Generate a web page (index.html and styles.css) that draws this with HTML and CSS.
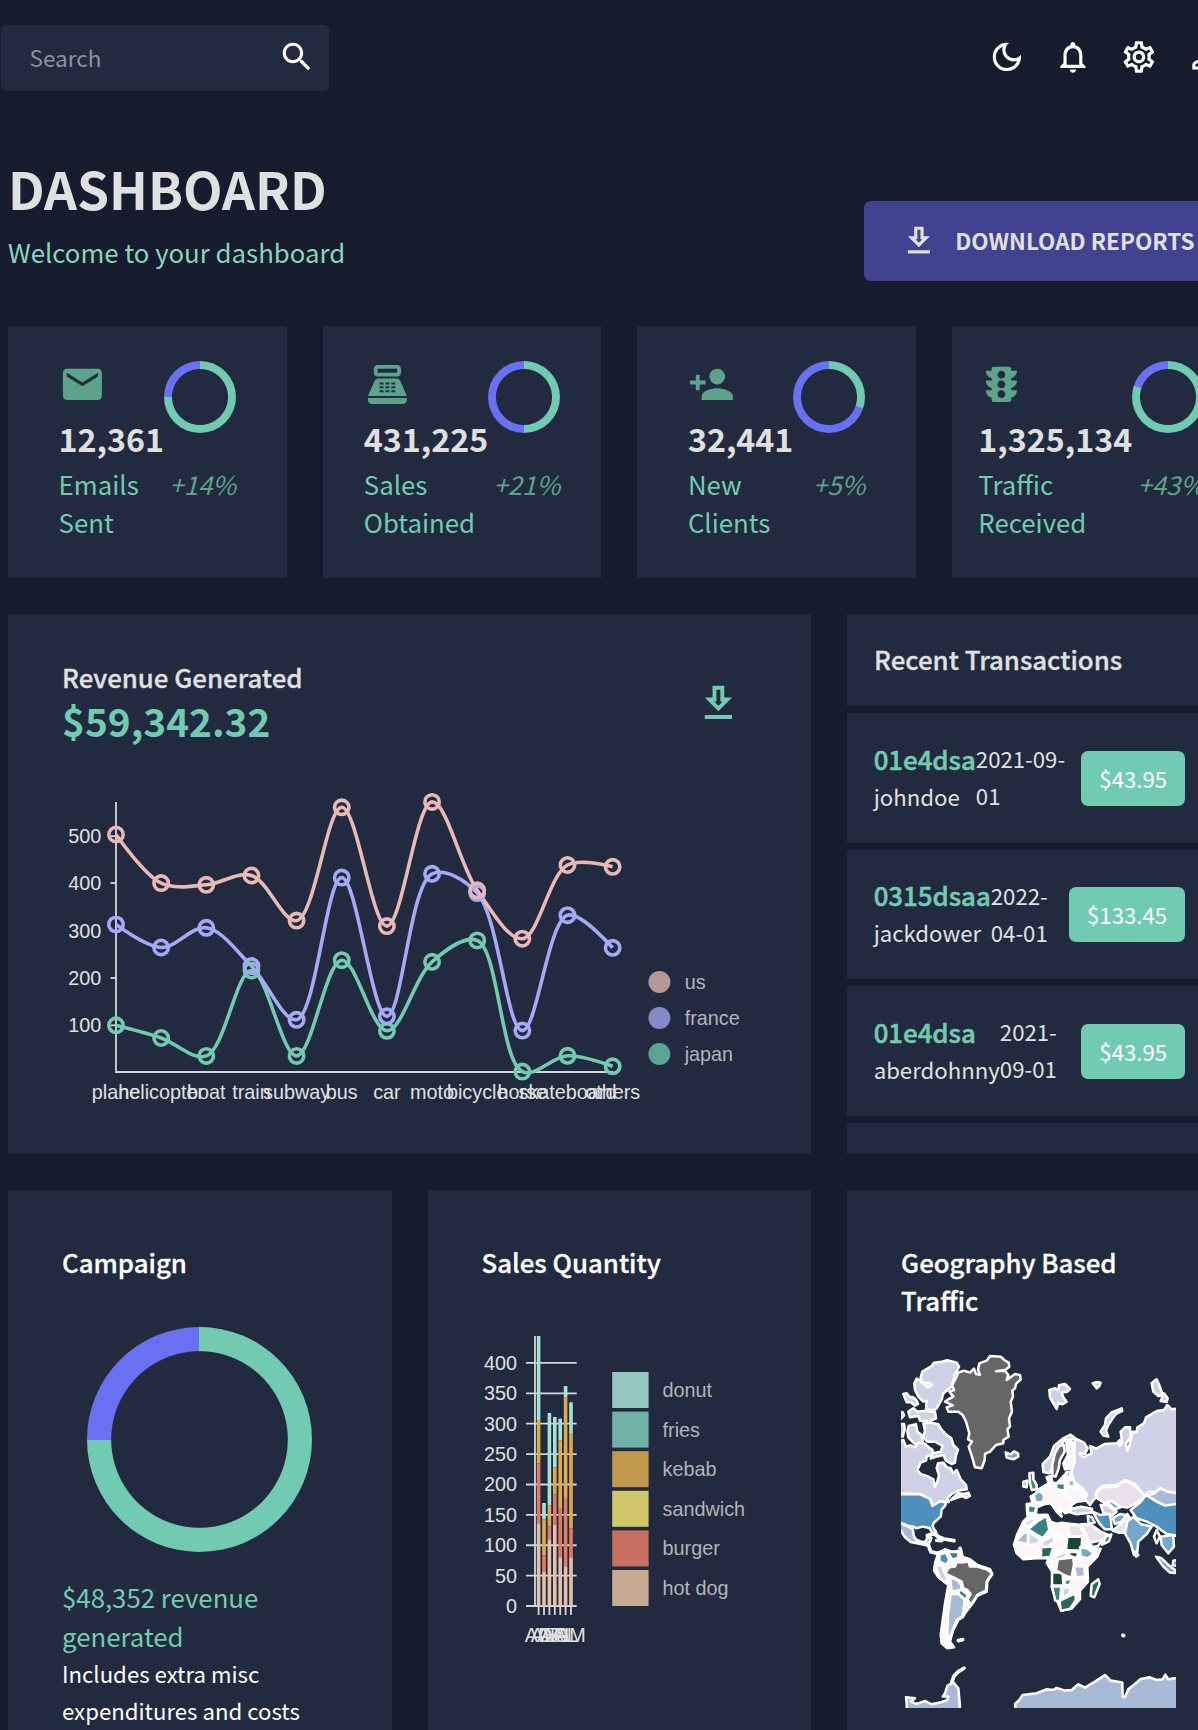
FILE: index.html
```html
<!DOCTYPE html>
<html lang="en">
<head>
<meta charset="utf-8">
<title>Dashboard</title>
<link rel="stylesheet" href="styles.css">
</head>
<body>
<div class="page">
  <header class="topbar">
    <label class="search">
      <span class="search-text">Search</span>
      <svg class="icon" viewBox="0 0 24 24"><path d="M15.5 14h-.79l-.28-.27C15.41 12.59 16 11.11 16 9.5 16 5.91 13.09 3 9.5 3S3 5.91 3 9.5 5.91 16 9.5 16c1.61 0 3.09-.59 4.23-1.57l.27.28v.79l5 4.99L20.49 19l-4.99-5zm-6 0C7.01 14 5 11.99 5 9.5S7.01 5 9.5 5 14 7.01 14 9.5 11.99 14 9.5 14z"/></svg>
    </label>
    <nav class="actions">
      <svg class="icon" viewBox="0 0 24 24"><path d="M9.37 5.51c-.18.64-.27 1.31-.27 1.99 0 4.08 3.32 7.4 7.4 7.4.68 0 1.35-.09 1.99-.27C17.45 17.19 14.93 19 12 19c-3.86 0-7-3.14-7-7 0-2.93 1.81-5.45 4.37-6.49zM12 3c-4.97 0-9 4.03-9 9s4.03 9 9 9 9-4.03 9-9c0-.46-.04-.92-.1-1.36-.98 1.37-2.58 2.26-4.4 2.26-2.98 0-5.4-2.42-5.4-5.4 0-1.81.89-3.42 2.26-4.4-.44-.06-.9-.1-1.36-.1z"/></svg>
      <svg class="icon" viewBox="0 0 24 24"><path d="M12 22c1.1 0 2-.9 2-2h-4c0 1.1.9 2 2 2zm6-6v-5c0-3.07-1.63-5.64-4.5-6.32V4c0-.83-.67-1.5-1.5-1.5s-1.5.67-1.5 1.5v.68C7.64 5.36 6 7.92 6 11v5l-2 2v1h16v-1l-2-2zm-2 1H8v-6c0-2.48 1.51-4.5 4-4.5s4 2.02 4 4.5v6z"/></svg>
      <svg class="icon" viewBox="0 0 24 24"><path d="M19.43 12.98c.04-.32.07-.64.07-.98 0-.34-.03-.66-.07-.98l2.11-1.65c.19-.15.24-.42.12-.64l-2-3.46c-.09-.16-.26-.25-.44-.25-.06 0-.12.01-.17.03l-2.49 1c-.52-.4-1.08-.73-1.69-.98l-.38-2.65C14.46 2.18 14.25 2 14 2h-4c-.25 0-.46.18-.49.42l-.38 2.65c-.61.25-1.17.59-1.69.98l-2.49-1c-.06-.02-.12-.03-.18-.03-.17 0-.34.09-.43.25l-2 3.46c-.13.22-.07.49.12.64l2.11 1.65c-.04.32-.07.65-.07.98 0 .33.03.66.07.98l-2.11 1.65c-.19.15-.24.42-.12.64l2 3.46c.09.16.26.25.44.25.06 0 .12-.01.17-.03l2.49-1c.52.4 1.08.73 1.69.98l.38 2.65c.03.24.24.42.49.42h4c.25 0 .46-.18.49-.42l.38-2.65c.61-.25 1.17-.59 1.69-.98l2.49 1c.06.02.12.03.18.03.17 0 .34-.09.43-.25l2-3.46c.12-.22.07-.49-.12-.64l-2.11-1.65zm-1.98-1.71c.04.31.05.52.05.73 0 .21-.02.43-.05.73l-.14 1.13.89.7 1.08.84-.7 1.21-1.27-.51-1.04-.42-.9.68c-.43.32-.84.56-1.25.73l-1.06.43-.16 1.13-.2 1.35h-1.4l-.19-1.35-.16-1.13-1.06-.43c-.43-.18-.83-.41-1.23-.71l-.91-.7-1.06.43-1.27.51-.7-1.21 1.08-.84.89-.7-.14-1.13c-.03-.31-.05-.54-.05-.74s.02-.43.05-.73l.14-1.13-.89-.7-1.08-.84.7-1.21 1.27.51 1.04.42.9-.68c.43-.32.84-.56 1.25-.73l1.06-.43.16-1.13.2-1.35h1.39l.19 1.35.16 1.13 1.06.43c.43.18.83.41 1.23.71l.91.7 1.06-.43 1.27-.51.7 1.21-1.07.85-.89.7.14 1.13zM12 8c-2.21 0-4 1.79-4 4s1.79 4 4 4 4-1.79 4-4-1.79-4-4-4zm0 6c-1.1 0-2-.9-2-2s.9-2 2-2 2 .9 2 2-.9 2-2 2z"/></svg>
      <svg class="icon" viewBox="0 0 24 24"><path d="M12 5.9c1.16 0 2.1.94 2.1 2.1s-.94 2.1-2.1 2.1S9.9 9.16 9.9 8s.94-2.1 2.1-2.1m0 9c2.97 0 6.1 1.46 6.1 2.1v1.1H5.9V17c0-.64 3.13-2.1 6.1-2.1M12 4C9.79 4 8 5.79 8 8s1.79 4 4 4 4-1.79 4-4-1.79-4-4-4zm0 9c-2.67 0-8 1.34-8 4v3h16v-3c0-2.66-5.33-4-8-4z"/></svg>
    </nav>
  </header>

  <main class="content">
    <div class="heading">
      <div>
        <h1>DASHBOARD</h1>
        <p class="welcome">Welcome to your dashboard</p>
      </div>
      <div class="button">
        <svg class="icon" viewBox="0 0 24 24"><path d="M19 9h-4V3H9v6H5l7 7 7-7zm-8 2V5h2v6h1.17L12 13.17 9.83 11H11zm-6 7h14v2H5z"/></svg>
        <span>DOWNLOAD REPORTS</span>
      </div>
    </div>

    <div class="grid">
      <section class="card stat">
        <div class="stat-box">
          <div class="stat-row">
            <div>
              <svg class="icon-lg" viewBox="0 0 24 24"><path d="M20 4H4c-1.1 0-1.99.9-1.99 2L2 18c0 1.1.9 2 2 2h16c1.1 0 2-.9 2-2V6c0-1.1-.9-2-2-2zm0 4l-8 5-8-5V6l8 5 8-5v2z"/></svg>
              <div class="number">12,361</div>
            </div>
            <div class="ring ring-75"></div>
          </div>
          <div class="stat-row"><span class="label">Emails Sent</span><span class="delta">+14%</span></div>
        </div>
      </section>
      <section class="card stat">
        <div class="stat-box">
          <div class="stat-row">
            <div>
              <svg class="icon-lg" viewBox="0 0 24 24"><path fill-rule="evenodd" d="M17 2H7c-1.1 0-2 .9-2 2v2c0 1.1.9 2 2 2h10c1.1 0 2-.9 2-2V4c0-1.1-.9-2-2-2zm0 4H7V4h10v2zm3 16H4c-1.1 0-2-.9-2-2v-1h20v1c0 1.1-.9 2-2 2zm-1.47-11.81C18.21 9.47 17.49 9 16.7 9H7.3c-.79 0-1.51.47-1.83 1.19L2 18h20l-3.47-7.81zM8 11h2v1H8zM11 11h2v1h-2zM14 11h2v1h-2zM8 13h2v1H8zM11 13h2v1h-2zM14 13h2v1h-2zM8 15h2v1H8zM11 15h2v1h-2zM14 15h2v1h-2z"/></svg>
              <div class="number">431,225</div>
            </div>
            <div class="ring ring-50"></div>
          </div>
          <div class="stat-row"><span class="label">Sales Obtained</span><span class="delta">+21%</span></div>
        </div>
      </section>
      <section class="card stat">
        <div class="stat-box">
          <div class="stat-row">
            <div>
              <svg class="icon-lg" viewBox="0 0 24 24"><path d="M15 12c2.21 0 4-1.79 4-4s-1.79-4-4-4-4 1.79-4 4 1.79 4 4 4zm-9-2V7H4v3H1v2h3v3h2v-3h3v-2H6zm9 4c-2.67 0-8 1.34-8 4v2h16v-2c0-2.66-5.33-4-8-4z"/></svg>
              <div class="number">32,441</div>
            </div>
            <div class="ring ring-30"></div>
          </div>
          <div class="stat-row"><span class="label">New Clients</span><span class="delta">+5%</span></div>
        </div>
      </section>
      <section class="card stat">
        <div class="stat-box">
          <div class="stat-row">
            <div>
              <svg class="icon-lg" viewBox="0 0 24 24"><path d="M20 10h-3V8.86c1.72-.45 3-2 3-3.86h-3V4c0-.55-.45-1-1-1H8c-.55 0-1 .45-1 1v1H4c0 1.86 1.28 3.41 3 3.86V10H4c0 1.86 1.28 3.41 3 3.86V15H4c0 1.86 1.28 3.41 3 3.86V20c0 .55.45 1 1 1h8c.55 0 1-.45 1-1v-1.14c1.72-.45 3-2 3-3.86h-3v-1.14c1.72-.45 3-2 3-3.86zm-8 9c-1.11 0-2-.9-2-2s.89-2 2-2c1.1 0 2 .9 2 2s-.89 2-2 2zm0-5c-1.11 0-2-.9-2-2s.89-2 2-2c1.1 0 2 .9 2 2s-.89 2-2 2zm0-5c-1.11 0-2-.9-2-2 0-1.11.89-2 2-2 1.1 0 2 .89 2 2 0 1.1-.89 2-2 2z"/></svg>
              <div class="number">1,325,134</div>
            </div>
            <div class="ring ring-80"></div>
          </div>
          <div class="stat-row"><span class="label">Traffic Received</span><span class="delta">+43%</span></div>
        </div>
      </section>

      <section class="card revenue">
        <div class="revenue-head">
          <div>
            <h2>Revenue Generated</h2>
            <div class="amount">$59,342.32</div>
          </div>
          <svg class="icon-lg accent" viewBox="0 0 24 24"><path d="M19 9h-4V3H9v6H5l7 7 7-7zm-8 2V5h2v6h1.17L12 13.17 9.83 11H11zm-6 7h14v2H5z"/></svg>
        </div>
        <svg class="chart" id="line-chart" width="803" height="374" viewBox="8 780 803 374"></svg>
      </section>

      <section class="card transactions">
        <div class="tx-head"><h2>Recent Transactions</h2></div>
        <div class="tx">
          <div class="who"><div class="tx-id">01e4dsa</div><div class="user">johndoe</div></div>
          <div class="date">2021-09-01</div>
          <div class="cost">$43.95</div>
        </div>
        <div class="tx">
          <div class="who"><div class="tx-id">0315dsaa</div><div class="user">jackdower</div></div>
          <div class="date">2022-04-01</div>
          <div class="cost">$133.45</div>
        </div>
        <div class="tx">
          <div class="who"><div class="tx-id">01e4dsa</div><div class="user">aberdohnny</div></div>
          <div class="date">2021-09-01</div>
          <div class="cost">$43.95</div>
        </div>
      </section>

      <section class="card panel">
        <h2 class="white">Campaign</h2>
        <div class="ring ring-75 ring-big"></div>
        <div class="campaign-total">$48,352 revenue generated</div>
        <div class="campaign-note">Includes extra misc expenditures and costs</div>
      </section>

      <section class="card panel">
        <h2 class="white">Sales Quantity</h2>
        <svg class="bars" id="bar-chart" width="383" height="400" viewBox="428 1281 383 400"></svg>
      </section>

      <section class="card panel">
        <h2 class="white">Geography Based Traffic</h2>
        <svg class="map" width="275" height="367.6" viewBox="33 0 825 1103">
          <g class="land">
            <path class="c2" d="M155 65L172 61 200 68 207 80 200 95 193 105 190 120 185 140 160 160 155 178 140 205 128 212 108 205 110 182 100 185 85 170 75 150 73 130 80 116 92 122 95 130 118 128 126 135 112 142 97 125 92 112 97 95 125 78 132 68Z"/>
            <path class="c2" d="M40 162L50 160 58 170 70 172 80 182 84 192 75 197 62 187 50 187ZM55 215L70 205 82 215 105 212 135 216 138 235 120 243 90 242 85 228 60 232ZM20 215L38 217 42 226 33 236 20 236Z"/>
            <path class="c2" d="M100 250L122 248 145 253 155 270 170 285 184 295 190 315 204 328 197 350 195 368 185 372 168 362 160 345 140 350 122 356 128 340 152 335 158 318 135 305 112 305 100 290 105 272Z"/>
            <path class="c2" d="M20 252L42 252 44 268 38 290 20 285ZM56 258L78 253 82 275 95 285 98 304 84 320 70 308 55 292 52 275Z"/>
            <path class="c2" d="M20 305L40 300 48 320 62 316 76 322 85 308 102 310 116 322 128 330 125 345 110 350 108 362 92 368 82 390 92 402 115 410 130 418 134 440 142 425 147 405 140 385 144 370 160 368 170 382 182 385 190 400 200 390 212 418 228 435 230 448 205 452 185 462 172 475 176 486 150 484 128 500 122 480 95 463 20 459Z"/>
            <path class="c2" d="M205 460L222 462 235 458 240 468 228 474 215 468 195 476 182 480Z"/>
            <path class="c5" d="M20 463L90 463 120 477 127 498 150 484 168 488 165 498 155 508 152 530 130 550 128 560 138 578 130 584 118 564 98 560 78 565 70 560 55 558 20 543Z"/>
            <path class="c3" d="M20 545L55 560 68 568 72 590 82 603 96 608 108 603 112 592 124 594 120 606 108 616 92 612 62 606 45 592 33 572 20 565Z"/>
            <path class="thin" d="M84 603L115 615 122 635 140 640 150 638M112 587L132 581 145 590 162 597 192 602M140 601L155 602M136 575L138 584M210 625L216 650"/>
            <path class="c0" d="M300 48L332 50 343 60 356 68 358 80 345 90 318 94 345 92 355 105 350 120 375 102 390 105 392 118 378 132 375 145 367 152 369 170 362 185 366 215 357 235 360 260 352 268 356 290 340 300 340 310 318 315 300 335 285 342 284 360 275 385 255 382 246 350 236 320 246 305 234 298 238 280 228 245 218 225 205 215 175 215 170 202 188 196 165 185 175 178 190 170 178 155 192 150 186 135 195 120 205 98 222 92 240 98 252 86 258 102 270 104 264 90 268 70 290 62Z"/>
            <path class="c4" d="M347 337L362 343 372 334 384 340 385 350 370 358 350 353Z"/>
            <path class="c2" d="M478 150L495 145 505 150 507 136 525 132 540 147 530 156 515 157 520 172 530 185 518 193 505 190 500 207 490 190 480 172ZM608 130L620 126 632 128 628 138 620 145ZM785 130L800 118 810 140 818 165 805 168 790 155ZM822 160L833 175 830 186 812 183ZM695 205L697 213 678 222 668 235 655 255 648 272 655 290 640 287 632 275 645 255 648 235 665 217Z"/>
            <path class="c2" d="M555 295L582 308 593 325 585 342 568 340 580 352 605 340 600 318 618 326 645 312 680 310 690 300 688 318 697 310 692 275 705 262 720 262 722 290 708 312 712 333 720 310 728 275 740 276 742 262 762 250 768 232 800 213 822 210 832 195 845 208 870 205 870 460 830 455 810 445 800 455 775 455 765 470 735 432 705 420 680 435 635 438 620 455 622 470 610 480 600 495 585 478 580 450 552 430 543 405 552 360Z"/>
            <path class="c2" d="M458 372L480 350 492 318 518 296 542 284 555 294 540 300 525 300 505 325 492 350 486 385 478 400 460 396Z"/>
            <path class="c0" d="M508 318L522 315 524 335 510 360 506 385 497 410 487 408 487 375 495 340Z"/>
            <path class="c1" d="M528 302L548 305 553 345 555 365 545 385 525 388 520 370 534 345Z"/>
            <path class="c1" d="M410 492L428 490 422 470 436 462 446 448 462 438 476 430 470 412 482 408 488 428 500 430 530 398 545 400 552 425 580 448 590 465 585 482 560 485 545 495 540 515 525 520 508 500 515 530 500 515 482 490 462 493 440 502 438 520 412 525Z"/>
            <path class="c7" d="M418 400L430 398 430 418 440 435 440 448 425 450 420 430ZM414 495L440 500 434 518 414 520Z"/>
            <path class="c4" d="M400 425L412 422 410 442 400 440ZM430 465L450 452 462 466 460 485 438 488Z"/>
            <path class="c7" d="M498 430L525 430 524 452 500 448ZM530 395L540 395 540 410 530 410Z"/>
            <path class="c3" d="M535 422L550 418 556 438 535 440Z"/>
            <path class="c1" d="M530 452L562 445 590 460 575 475 545 480 530 468Z"/>
            <path class="c2" d="M540 508L572 500 606 506 606 518 560 523 542 518Z"/>
            <path class="c6" d="M616 465L635 442 680 440 702 422 732 435 765 468 738 490 712 503 690 500 665 483 648 492 625 478Z"/>
            <path class="c4" d="M650 485L665 483 692 502 675 508Z"/>
            <path class="c2" d="M632 495L650 495 680 515 665 528 640 518Z"/>
            <path class="c5" d="M608 515L630 525 660 522 666 568 645 568 628 550Z"/>
            <path class="c4" d="M668 535L690 522 708 525 695 545 675 552Z"/>
            <path class="c6" d="M668 572L700 545 712 522 722 538 705 578 685 578Z"/>
            <path class="c7" d="M593 528L606 532 614 548 596 552Z"/>
            <path class="c3" d="M768 465L790 462 812 445 832 455 870 462 870 492 825 497 800 485Z"/>
            <path class="c5" d="M768 465L800 485 825 497 870 490 870 590 830 582 800 560 770 545 740 535 722 510 750 488Z"/>
            <path class="c4" d="M712 545L730 530 752 552 785 560 770 582 745 605 742 635 732 645 722 610 705 580Z"/>
            <path class="c9" d="M800 570L810 590 800 610 792 590Z"/>
            <path class="c4" d="M812 590L850 585 852 620 835 640 815 615ZM798 650L815 655 835 675 858 692 870 700 840 698 820 680ZM735 635L745 645 738 650ZM850 662L870 660 870 680 848 675Z"/>
            <path class="c1" d="M400 545L412 532 440 525 472 524 482 545 500 552 515 548 570 555 580 560 600 625 632 626 622 650 592 680 594 725 570 752 570 778 545 806 514 812 502 785 485 742 490 700 472 672 474 655 440 655 400 658 380 640 372 615 382 582Z"/>
            <path class="c7" d="M414 568L445 542 470 528 478 570 458 595Z"/>
            <path class="c2" d="M402 550L428 534 438 542 412 560ZM414 575L452 600 440 612 414 616ZM456 604L494 586 492 606 470 622 455 618Z"/>
            <path class="c3" d="M378 602L400 580 414 575 414 612 382 606Z"/>
            <path class="c1" d="M476 550L535 555 535 596 480 572ZM495 586L530 598 522 630 495 640Z"/>
            <path class="c6" d="M537 553L568 555 584 588 537 590Z"/>
            <path class="c9" d="M532 590L577 590 574 632 528 630ZM535 636L565 636 560 655 540 648ZM486 698L518 698 520 737 486 737Z"/>
            <path class="c8" d="M453 622L490 620 482 650 453 654ZM508 783L535 770 555 760 558 780 540 807 513 812ZM605 733L625 718 629 732 613 772 602 768Z"/>
            <path class="c7" d="M495 650L530 638 528 648 500 658ZM522 722L548 715 538 735 525 735ZM486 740L514 740 510 784 496 782Z"/>
            <path class="c4" d="M570 622L590 625 612 640 595 655 572 650ZM470 668L488 665 482 682Z"/>
            <path class="c0" d="M503 658L550 653 552 675 544 714 520 704 498 691Z"/>
            <path class="c3" d="M552 678L582 680 586 710 558 712Z"/>
            <path class="c2" d="M517 746L540 740 540 760 518 774Z"/>
            <path class="c6" d="M573 553L600 552 632 575 655 585 645 600 608 618 595 598Z"/>
            <path class="c9" d="M603 608L637 600 624 618 604 622Z"/>
            <path class="c7" d="M648 590L664 583 657 604 636 614Z"/>
          </g>
          <g class="land" transform="translate(0 540)">
            <path class="c1" d="M145 98L165 88 185 95 205 93 215 110 240 118 262 135 300 148 307 162 292 185 290 215 262 228 248 250 225 280 218 292 205 300 190 330 185 345 180 365 192 382 172 385 155 370 152 345 165 250 175 195 145 172 132 152 135 130Z"/>
            <path class="c5" d="M148 104L168 98 178 120 168 135 148 124Z"/>
            <path class="c7" d="M172 96L205 96 205 112 188 120ZM206 204L234 225 226 240 206 222ZM220 254L236 260 228 272Z"/>
            <path class="c2" d="M136 138L155 136 165 160 178 190 150 176Z"/>
            <path class="c3" d="M180 172L200 180 215 195 212 210 185 215ZM182 222L205 222 224 240 218 290 200 300 182 345 178 365 172 340 174 280Z"/>
            <path class="c0" d="M165 160L178 142 195 140 200 126 215 128 235 125 240 140 262 140 290 148 306 160 290 185 288 212 262 225 244 253 232 240 242 222 232 210 220 205 215 185 190 172Z"/>
            <path class="thin" d="M158 340L155 362 180 380M205 362L218 359M699 346L701 347"/>
            <path class="c3" d="M378 580L375 552 388 540 398 525 440 520 470 508 490 510 500 504 525 512 545 510 565 493 585 503 615 485 645 465 662 482 697 488 698 530 705 532 715 508 740 488 750 478 778 472 800 480 818 478 826 464 835 478 870 472 870 580ZM50 580L50 550 48 532 75 535 62 545 80 552 105 543 125 553 150 548 172 540 175 530 158 530 165 520 172 498 190 487 205 505 210 560 200 580Z"/>
            <path class="thin" d="M185 488L192 468 205 455 222 445"/>
          </g>
        </svg>
      </section>
    </div>
  </main>
</div>
<script src="charts.js"></script>
</body>
</html>
```
FILE: styles.css
```css
* { box-sizing: border-box; }

body {
  margin: 0;
  background: #161b2d;
  color: #e0e0e0;
  font-family: "Noto Sans CJK JP", "Noto Sans CJK SC", "Open Sans", sans-serif;
  font-size: 22.2px;
  line-height: 37px;
}

h1, h2, p { margin: 0; }

.page {
  width: 1198px;
  height: 1730px;
  overflow: hidden;
}

.topbar {
  display: flex;
  justify-content: space-between;
  align-items: flex-start;
  width: 1224px;
  padding: 25px 0 0 1px;
}

.search {
  display: flex;
  justify-content: space-between;
  align-items: center;
  width: 328px;
  height: 66px;
  padding: 0 13px 2px 28.6px;
  border-radius: 5px;
  background: #222a3f;
}

.search-text { color: #8e929c; font-size: 22.5px; }

.icon {
  display: block;
  flex: none;
  width: 37.8px;
  height: 37.8px;
  fill: #fff;
}

.icon-lg {
  display: block;
  width: 46.8px;
  height: 46.8px;
  fill: #5da38b;
}

.icon-lg.accent { fill: #71cbb0; }

.actions {
  display: flex;
  gap: 28.2px;
  padding-top: 13.2px;
}

.content {
  width: 1230.6px;
  padding: 60.5px 0 0 8px;
}

.heading {
  display: flex;
  justify-content: space-between;
  align-items: flex-end;
  height: 129.5px;
  margin-bottom: 45px;
}

.heading > div:first-child { align-self: flex-start; }

h1 {
  font-size: 51.4px;
  font-weight: 700;
  line-height: 72px;
}

.welcome {
  margin-top: 9.3px;
  color: #87d6be;
  font-size: 25.8px;
  line-height: 38px;
}

.button {
  display: flex;
  align-items: center;
  gap: 17.4px;
  width: 366.6px;
  height: 80px;
  padding: 0 0 1px 36px;
  border-radius: 7px;
  background: #414391;
  font-size: 22.5px;
  font-weight: 700;
  white-space: nowrap;
}

.button .icon { fill: #e0e0e0; }

.grid {
  display: grid;
  grid-template-columns: repeat(12, minmax(0, 1fr));
  grid-template-rows: 252px 540px 576px;
  gap: 36px;
}

.card {
  background: #222a3f;
  min-width: 0;
  overflow: hidden;
}

.stat {
  grid-column: span 3;
  display: flex;
  justify-content: center;
  padding-top: 35px;
}

.stat-box { width: min-content; }

.stat-row {
  display: flex;
  justify-content: space-between;
}

.number {
  margin: 3.9px 0 1px;
  font-size: 32.2px;
  font-weight: 700;
  line-height: 52px;
}

.label, .delta {
  font-size: 25.8px;
  line-height: 38px;
}

.label { color: #71cbb0; }
.delta { color: #5da38b; font-style: italic; }

.ring {
  --share: 75%;
  --hole: 28px;
  flex: none;
  width: 72px;
  height: 72px;
  border-radius: 50%;
  background:
    radial-gradient(circle, #222a3f calc(var(--hole) - .5px), transparent calc(var(--hole) + .5px)),
    conic-gradient(#71cbb0 var(--share), #6a70f2 0);
}

.ring-50 { --share: 50%; }
.ring-30 { --share: 30%; }
.ring-80 { --share: 80%; }

.ring-big {
  --hole: 88.3px;
  width: 225px;
  height: 225px;
  margin: 46.2px auto 26.3px;
}

h2 {
  font-size: 25.8px;
  font-weight: 500;
  line-height: 38px;
  -webkit-text-stroke: .3px currentColor;
}

.white { color: #fff; }

.revenue { grid-column: span 8; }

.revenue-head {
  display: flex;
  justify-content: space-between;
  height: 166px;
  padding: 44px 69px 0 54px;
}

.revenue-head .icon-lg { margin-top: 22px; }

.amount {
  margin-top: -4px;
  color: #71cbb0;
  font-size: 38.8px;
  font-weight: 700;
  line-height: 56px;
}

.chart, .bars, .map { display: block; }

svg text {
  font-family: "Liberation Sans", Arial, sans-serif;
  font-size: 19.8px;
  fill: #e0e0e0;
}

svg .legend text { fill: #b2b4b9; }

.axis { stroke: #d5d6d8; stroke-width: 1.8; fill: none; }
.series { fill: none; stroke-width: 3.6; }

.transactions { grid-column: span 4; }

.tx-head {
  height: 99.2px;
  padding: 25.8px 27px 0;
  border-bottom: 7.2px solid #161b2d;
}

.tx {
  display: flex;
  justify-content: space-between;
  align-items: center;
  height: 136.5px;
  padding: 0 45.5px 0 26.6px;
  border-bottom: 7.2px solid #161b2d;
}

.who, .cost { flex: none; }

.who { margin-top: -1px; }
.date { margin-top: -1px; }

.tx-id {
  color: #71cbb0;
  font-size: 25.8px;
  font-weight: 500;
  line-height: 38px;
  -webkit-text-stroke: .5px currentColor;
}

.cost {
  height: 55px;
  margin-top: 1px;
  padding: 8.6px 18px;
  border-radius: 7px;
  background: #71cbb0;
  color: #fff;
}

.panel {
  grid-column: span 4;
  padding: 52.8px 54px 0;
}

.campaign-total {
  color: #71cbb0;
  font-size: 25.8px;
  line-height: 38.5px;
}

.campaign-note { color: #fff; }

.bars { margin-left: -54px; }

.map { margin-top: 21.2px; }

.land path {
  stroke: #fff;
  stroke-width: 7.5;
  stroke-linejoin: round;
}

.land .thin { fill: none; stroke-width: 11; stroke-linecap: round; }

.land .c0 { fill: #666; }
.land .c1 { fill: #fcf6fb; }
.land .c2 { fill: #d0d1e6; }
.land .c3 { fill: #a9bad8; }
.land .c4 { fill: #76a6cc; }
.land .c5 { fill: #4f8fbd; }
.land .c6 { fill: #e9e0ec; }
.land .c7 { fill: #388084; }
.land .c8 { fill: #2d6a56; }
.land .c9 { fill: #1c4636; }
```
FILE: charts.js
```js
const NS = "http://www.w3.org/2000/svg";

function add(parent, tag, attrs, text) {
  const el = document.createElementNS(NS, tag);
  for (const key in attrs) el.setAttribute(key, attrs[key]);
  if (text !== undefined) el.textContent = text;
  parent.appendChild(el);
  return el;
}

// Centripetal Catmull-Rom spline through the points
function spline(pts) {
  const dist = (a, b) => Math.hypot(a[0] - b[0], a[1] - b[1]);
  let d = "M" + pts[0];
  for (let i = 0; i < pts.length - 1; i++) {
    const p0 = pts[i - 1] || pts[i], p1 = pts[i], p2 = pts[i + 1], p3 = pts[i + 2] || p2;
    const A = dist(p0, p1), B = dist(p1, p2), C = dist(p2, p3);
    const a = Math.sqrt(A), b = Math.sqrt(B), c = Math.sqrt(C);
    const c1 = [0, 1].map(k => a < 1e-6 ? p1[k] :
      (p1[k] * (2 * A + 3 * a * b + B) - p0[k] * B + p2[k] * A) / (3 * a * (a + b)));
    const c2 = [0, 1].map(k => c < 1e-6 ? p2[k] :
      (p2[k] * (2 * C + 3 * c * b + B) + p1[k] * C - p3[k] * B) / (3 * c * (c + b)));
    d += "C" + c1 + " " + c2 + " " + p2;
  }
  return d;
}

function lineChart() {
  const svg = document.getElementById("line-chart");
  const names = ["plane", "helicopter", "boat", "train", "subway", "bus", "car", "moto", "bicycle", "horse", "skateboard", "others"];
  const x = i => 116 + i * 45.15;
  const series = [
    ["#71cbb0", [1025.3, 1038, 1055.9, 970.5, 1055.9, 960.2, 1030.8, 961.8, 940.4, 1071.6, 1055.8, 1066.3]],
    ["#a5a9f6", [924.4, 947.5, 927.8, 966.1, 1019.8, 877.6, 1016.3, 873.8, 893.1, 1030.6, 915.2, 947.8]],
    ["#e8b9b6", [834.5, 883.1, 884.8, 875.5, 920.6, 807.3, 926.1, 801.9, 890.3, 938.7, 865, 866.8]]
  ];
  add(svg, "path", { class: "axis", d: "M116 802V1072H613" });
  [[500, 836.2], [400, 883], [300, 931], [200, 978], [100, 1025.3]].forEach(([v, y]) => {
    add(svg, "path", { class: "axis", d: `M110.5 ${y}H116` });
    add(svg, "text", { x: 101.3, y: y + 7, "text-anchor": "end" }, v);
  });
  names.forEach((n, i) => add(svg, "text", { x: x(i), y: 1099.4, "text-anchor": "middle" }, n));
  series.forEach(([color, ys]) =>
    add(svg, "path", { class: "series", stroke: color, d: spline(ys.map((y, i) => [x(i), y])) }));
  series.forEach(([color, ys]) => ys.forEach((y, i) =>
    add(svg, "circle", { cx: x(i), cy: y, r: 7.2, fill: "none", stroke: color, "stroke-width": 3.6 })));
  const legend = add(svg, "g", { class: "legend" });
  [["us", "#b69798", 982], ["france", "#858ac7", 1018], ["japan", "#5da393", 1054]].forEach(([n, c, y]) => {
    add(legend, "circle", { cx: 659.4, cy: y, r: 11, fill: c });
    add(legend, "text", { x: 684.7, y: y + 7 }, n);
  });
}

function barChart() {
  const svg = document.getElementById("bar-chart");
  for (let i = 0; i <= 8; i++) {
    const y = 1606 - i * 30.38;
    add(svg, "path", { class: "axis", d: `M526 ${y}H576.7` });
    add(svg, "text", { x: 516.9, y: y + 7, "text-anchor": "end" }, i * 50);
  }
  add(svg, "path", { class: "axis", d: "M535 1336V1606" });
  const colors = ["#a7e1d5", "#deaa4a", "#e27a68", "#e2c1a8"];
  const bars = [
    ["AD", 1336, 1420, 1463.3, 1523.3], ["AE", 1503, 1519.3, 1555.3, 1571.7],
    ["AF", 1413, 1505.3, 1526.3, 1539.3], ["AG", 1417, 1467.3, 1494.3, 1525],
    ["AI", 1418.7, 1440.3, 1508.7, 1557.3], ["AL", 1386, 1397.3, 1498, 1566.3],
    ["AM", 1402.3, 1433, 1528.3, 1557.3]
  ];
  bars.forEach(([name, ...tops], i) => {
    const cx = 538.6 + i * 5.4;
    add(svg, "path", { class: "axis", d: `M${cx} 1606v9` });
    tops.forEach((top, k) => add(svg, "rect", {
      x: cx - 1.8, y: top, width: 3.6, height: (tops[k + 1] || 1606) - top, fill: colors[k]
    }));
    add(svg, "text", { x: cx, y: 1641.8, "text-anchor": "middle" }, name);
  });
  const legend = add(svg, "g", { class: "legend" });
  [["donut", "#96c6bf"], ["fries", "#70b1a8"], ["kebab", "#c2984c"], ["sandwich", "#d0c76b"], ["burger", "#c76f61"], ["hot dog", "#c5a992"]].forEach(([n, c], i) => {
    const y = 1372 + i * 39.6;
    add(legend, "rect", { x: 612.2, y, width: 36.4, height: 36, fill: c });
    add(legend, "text", { x: 662.6, y: y + 25 }, n);
  });
}

lineChart();
barChart();
```
